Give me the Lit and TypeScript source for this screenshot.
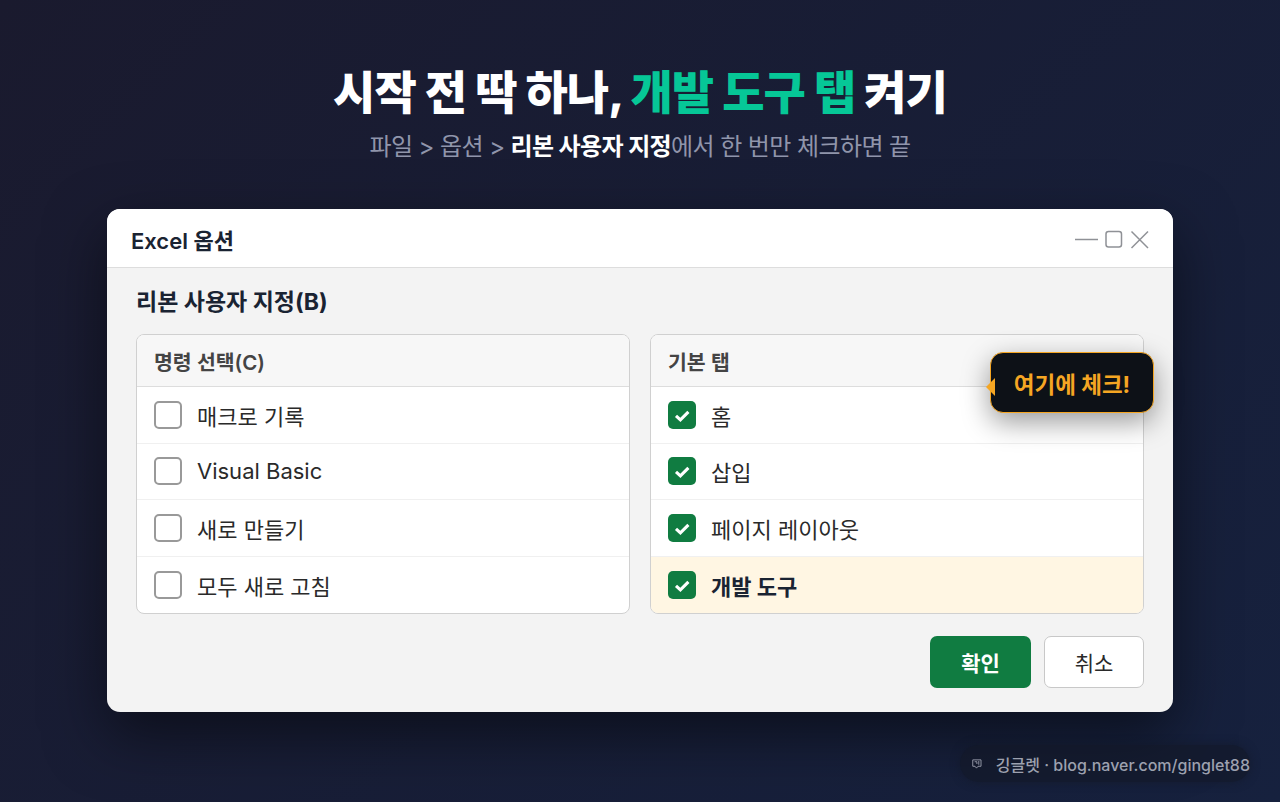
import { LitElement, html, css, svg } from "lit";
import { customElement, property } from "lit/decorators.js";
import { classMap } from "lit/directives/class-map.js";

interface Row { label: string; cls: string; on?: boolean; hot?: boolean }

@customElement("option-panel")
class OptionPanel extends LitElement {
  @property() heading = "";
  @property() kind = "";
  @property({ attribute: false }) rows: Row[] = [];

  static styles = css`
    :host { display: flex; flex-direction: column; flex: 1; box-sizing: border-box; height: 280px;
      border: 1px solid #d0d0d0; border-radius: 8px; background: #fff; overflow: hidden; }
    .head { box-sizing: border-box; height: 52px; padding-left: 17px; display: flex; align-items: center;
      background: #f7f7f7; border-bottom: 1px solid #ddd; color: #444; font-weight: 600; font-size: 20.5px; white-space: nowrap; }
    .row { box-sizing: border-box; height: 56.5px; padding-left: 17px; display: flex; align-items: center; gap: 15px;
      border-bottom: 1px solid #f0f0f0; color: #2a2a2a; font-size: 22px; }
    .row:last-child { border-bottom: 0; flex: 1; }
    .hot { background: #fff6e3; color: #1a2332; font-weight: 700; }
    .box { box-sizing: border-box; width: 28px; height: 28px; border: 2px solid #999; border-radius: 5px; background: #fff; flex: none; }
    .on { border: 0; background: #107c41; }
    .box svg { display: block; width: 28px; height: 28px; }
    .label { white-space: nowrap; }
  `;

  render() {
    return html`
      <div class="head"><span class="label ${this.kind}">${this.heading}</span></div>
      ${this.rows.map(r => html`
        <div class=${classMap({ row: true, hot: !!r.hot })}>
          <span class=${classMap({ box: true, on: !!r.on })}>
            ${r.on ? svg`<svg viewBox="0 0 28 28"><path d="M8 14.8 L12.4 18.8 L20.4 10.8" fill="none" stroke="#fff" stroke-width="3.1"/></svg>` : ""}
          </span>
          <span class="label ${r.cls}">${r.label}</span>
        </div>`)}
    `;
  }
}

@customElement("app-root")
class AppRoot extends LitElement {
  static styles = css`
    :host { display: flex; flex-direction: column; align-items: center; box-sizing: border-box; width: 1280px; height: 802px;
      padding-top: 62px; overflow: hidden; position: relative;
      background: linear-gradient(135deg, #1a1a2e 0%, #16213e 100%);
      font-family: Inter, "Noto Sans CJK KR", sans-serif; }
    h1, p, h2 { margin: 0; white-space: nowrap; }
    h1 { height: 60px; line-height: 60px; font-size: 46px; font-weight: 800; color: #fff; letter-spacing: -1px; }
    .accent { color: #06c797; }
    p { margin-top: 8px; height: 34px; line-height: 34px; font-size: 24px; color: #9095ab; letter-spacing: -0.6px; }
    b { color: #fff; font-weight: 700; }
    .dialog { position: relative; box-sizing: border-box; width: 1066px; height: 503px; margin-top: 45px; border-radius: 13px;
      background: #f3f3f3; box-shadow: 0 22px 60px rgba(0,0,0,.5); display: flex; flex-direction: column; }
    .bar { box-sizing: border-box; height: 58.5px; padding: 2px 24px 0 24px; display: flex; align-items: center; justify-content: space-between;
      background: #fff; border-bottom: 1px solid #ddd; border-radius: 13px 13px 0 0; font-size: 22px; font-weight: 600; color: #1a2332; }
    .bar svg { width: 76px; height: 24px; }
    h2 { height: 34px; line-height: 34px; margin: 17.5px 0 0 29px; font-size: 23px; font-weight: 700; color: #1a2332; }
    .panels { display: flex; gap: 20px; margin: 15px 29px 0; }
    .actions { display: flex; justify-content: flex-end; gap: 13px; margin: 22px 29px 0; }
    .btn { box-sizing: border-box; width: 100px; height: 52px; border-radius: 7px; border: 1px solid #c8c8c8; background: #fff;
      display: flex; align-items: center; justify-content: center; font-size: 21px; color: #2a2a2a; }
    .ok { width: 101px; border: 0; background: #107c41; color: #fff; font-weight: 700; }
    .tip { position: absolute; left: 883px; top: 143px; box-sizing: border-box; width: 164px; height: 61px; border-radius: 13px;
      border: 1.5px solid #f5a623; background: #0d1117; box-shadow: 0 9px 28px rgba(0,0,0,.4);
      display: flex; align-items: center; justify-content: center; font-size: 22.5px; font-weight: 700; color: #f5a623; white-space: nowrap; }
    .tip svg { position: absolute; left: -5px; top: 25px; width: 9px; height: 18px; }
    .credit { position: absolute; left: 960px; top: 745px; box-sizing: border-box; width: 290px; height: 37px; border-radius: 19px;
      padding-left: 12px; display: flex; align-items: center; gap: 14px; color: #9da1af; font-size: 16px; font-weight: 500;
      background: rgba(18,24,38,.6); box-shadow: 0 0 10px rgba(18,24,38,.6); white-space: nowrap; }
    .credit svg { width: 13px; height: 14px; }
  `;

  private left: Row[] = [
    { label: "매크로 기록", cls: "" }, { label: "Visual Basic", cls: "lat" },
    { label: "새로 만들기", cls: "" }, { label: "모두 새로 고침", cls: "" },
  ];
  private right: Row[] = [
    { label: "홈", cls: "", on: true }, { label: "삽입", cls: "", on: true },
    { label: "페이지 레이아웃", cls: "", on: true }, { label: "개발 도구", cls: "", on: true, hot: true },
  ];

  render() {
    return html`
      <h1>시작 전 딱 하나, <span class="accent">개발 도구 탭</span> 켜기</h1>
      <p>파일 &gt; 옵션 &gt; <b>리본 사용자 지정</b>에서 한 번만 체크하면 끝</p>
      <section class="dialog">
        <div class="bar">
          <span>Excel 옵션</span>
          <svg viewBox="0 0 76 24" fill="none" stroke="#8f9196" stroke-width="1.5">
            <path d="M2 12.5H25"/><rect x="33" y="4.5" width="15.5" height="15.5" rx="2.5"/><path d="M58.5 4.5L75 21M75 4.5L58.5 21"/>
          </svg>
        </div>
        <h2>리본 사용자 지정(B)</h2>
        <div class="panels">
          <option-panel heading="명령 선택(C)" .rows=${this.left}></option-panel>
          <option-panel heading="기본 탭" .rows=${this.right}></option-panel>
        </div>
        <div class="actions"><div class="btn ok">확인</div><div class="btn">취소</div></div>
        <div class="tip"><svg viewBox="0 0 9 18"><path d="M0 9L9 0V18Z" fill="#f5a623"/></svg>여기에 체크!</div>
      </section>
      <div class="credit">
        <svg viewBox="0 0 13 14" fill="none" stroke="#9da1af" stroke-width="1.2"><path d="M1 1.5H12V10H8L6 12.5L4 10H1Z"/><path d="M3.5 4H6.5V7M9 3V8"/></svg>
        <span>깅글렛 · blog.naver.com/ginglet88</span>
      </div>
    `;
  }
}
